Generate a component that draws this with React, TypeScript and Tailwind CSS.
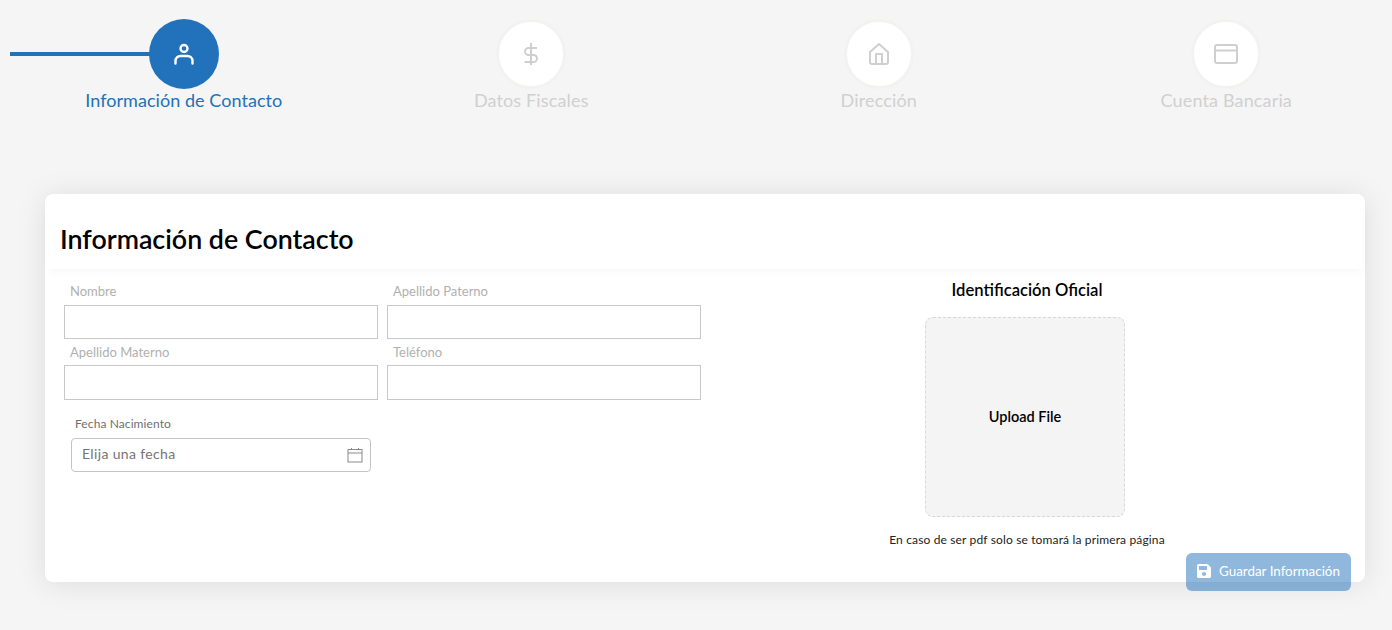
import { FaSave } from "react-icons/fa";

function UserIcon() {
  return (
    <svg width="24" height="24" viewBox="0 0 24 24" fill="none" stroke="#fff" strokeWidth="2.4" strokeLinecap="round">
      <circle cx="12" cy="6.5" r="3.5" />
      <path d="M3.5 21.5v-2.5a5 5 0 0 1 5-5h7a5 5 0 0 1 5 5v2.5" />
    </svg>
  );
}
function DollarIcon() {
  return (
    <svg width="24" height="24" viewBox="0 0 24 24" fill="none" stroke="#cfcfcf" strokeWidth="2">
      <path d="M12 1v22M18 6H9.5a3.5 3.5 0 0 0 0 7h5a3.5 3.5 0 0 1 0 7H5.5" />
    </svg>
  );
}
function HomeIcon() {
  return (
    <svg width="24" height="24" viewBox="0 0 24 24" fill="none" stroke="#cfcfcf" strokeWidth="2" strokeLinejoin="round">
      <path d="M12 2 3 10v10a2 2 0 0 0 2 2h14a2 2 0 0 0 2-2V10z" />
      <path d="M9 22V12h6v10" />
    </svg>
  );
}
function CardIcon() {
  return (
    <svg width="26" height="24" viewBox="0 0 26 24" fill="none" stroke="#cfcfcf" strokeWidth="2">
      <rect x="2" y="3" width="22" height="18" rx="2" />
      <path d="M2 8.5h22" />
    </svg>
  );
}
function CalendarIcon() {
  return (
    <svg width="16" height="16" viewBox="0 0 16 16" fill="none" stroke="#8a8a8a" strokeWidth="1">
      <rect x="1" y="2.5" width="14" height="12.5" />
      <path d="M1 6h14M4.5 1v2M11.5 1v2" />
    </svg>
  );
}

function Step({ label, icon, active }: { label: string; icon: React.ReactNode; active?: boolean }) {
  return (
    <div className="flex w-[347.5px] shrink-0 flex-col items-center">
      {active ? (
        <div className="flex h-[70px] w-[70px] items-center justify-center rounded-full bg-[#2172ba]">{icon}</div>
      ) : (
        <div className="flex h-[70px] w-[70px] items-center justify-center rounded-full border-[3px] border-[#f2f2f0] bg-white">{icon}</div>
      )}
      <div className={active ? "-mt-[1px] text-[18px] leading-6 tracking-[0.05px] text-[#2172ba]" : "-mt-[1px] text-[18px] leading-6 tracking-[0.15px] text-[#d0d0d0]"}>{label}</div>
    </div>
  );
}

function Field({ label, tall }: { label: string; tall?: boolean }) {
  return (
    <div className="w-[314px]">
      <div className="pl-[6px] text-[13px] leading-[18px] text-[#b0b0b0]">{label}</div>
      {tall ? (
        <input className="mt-[4px] block h-[35px] w-full border border-[#c8c8c8] bg-white outline-none" />
      ) : (
        <input className="mt-[5px] block h-[34px] w-full border border-[#c8c8c8] bg-white outline-none" />
      )}
    </div>
  );
}

export default function App() {
  return (
    <div className="relative h-[630px] w-[1392px] overflow-hidden bg-[#f5f5f5] font-['Lato','Noto_Sans',sans-serif]">
      <div className="relative flex pl-[10px] pt-[19px]">
        <div className="absolute left-[10px] top-[52px] h-[4px] w-[140px] bg-[#2172ba]" />
        <div className="relative flex">
          <Step label="Información de Contacto" icon={<UserIcon />} active />
          <Step label="Datos Fiscales" icon={<DollarIcon />} />
          <Step label="Dirección" icon={<HomeIcon />} />
          <Step label="Cuenta Bancaria" icon={<CardIcon />} />
        </div>
      </div>

      <div className="relative ml-[45px] mt-[82px] h-[388px] w-[1320px] rounded-lg bg-white shadow-[0_2px_30px_rgba(0,0,0,0.1)]">
        <div className="h-[75px] pl-[15px] pt-[26px] shadow-[0_6px_10px_-4px_rgba(0,0,0,0.04)]">
          <h1 className="text-[26.8px] font-semibold leading-[38px] text-black">Información de Contacto</h1>
        </div>
        <div className="flex">
          <div className="w-[660px] pl-[19px]">
            <div className="mt-[13px] flex gap-[9px]">
              <Field label="Nombre" />
              <Field label="Apellido Paterno" />
            </div>
            <div className="mt-[4px] flex gap-[9px]">
              <Field label="Apellido Materno" tall />
              <Field label="Teléfono" tall />
            </div>
            <div className="ml-[7px] mt-[16px] w-[300px]">
              <div className="pl-[4px] text-[12px] leading-4 tracking-[0.1px] text-[#6f6f6f]">Fecha Nacimiento</div>
              <div className="mt-[6px] flex h-[34px] items-center justify-between rounded border border-[#c4c4c4] pl-[10px] pr-[7px]">
                <span className="-translate-y-[2px] text-[14px] tracking-[0.35px] text-[#757575]">Elija una fecha</span>
                <CalendarIcon />
              </div>
            </div>
          </div>
          <div className="flex flex-1 flex-col items-center pr-[16px]">
            <h2 className="mt-[11px] text-[16.6px] font-semibold leading-[20px] text-black">Identificación Oficial</h2>
            <div className="mr-[4px] mt-[17px] flex h-[200px] w-[200px] items-center justify-center rounded-lg border border-dashed border-[#d8d8d8] bg-[#f4f4f4] text-[14.5px] font-semibold text-black">
              Upload File
            </div>
            <p className="mt-[16px] text-[12px] leading-[14px] tracking-[0.15px] text-[#222]">En caso de ser pdf solo se tomará la primera página</p>
          </div>
        </div>
        <button className="absolute left-[1141px] top-[359px] flex h-[38px] w-[165px] items-center justify-center gap-[7px] rounded-md bg-[#2172ba]/50 pb-[2px] pr-[1px] text-[13.4px] text-white">
          <FaSave className="text-[16px]" />
          Guardar Información
        </button>
      </div>
    </div>
  );
}
